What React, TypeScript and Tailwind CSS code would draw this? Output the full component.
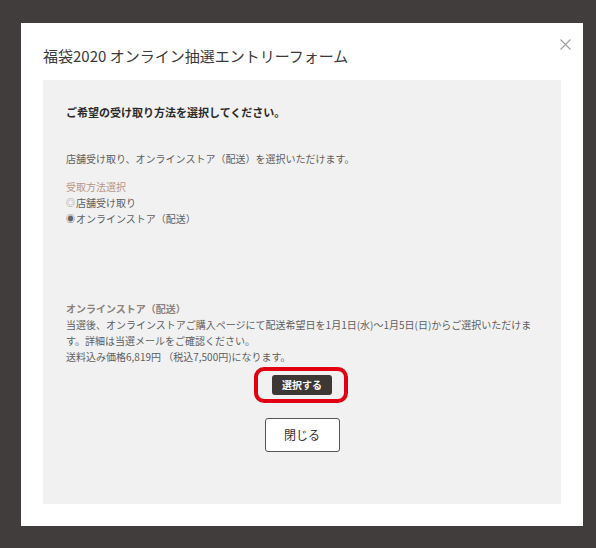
import React from "react";

const font = { fontFamily: '"Noto Sans CJK JP", "Noto Sans", sans-serif' };

export default function App() {
  return (
    <div
      className="w-[596px] h-[548px] bg-[#413d3d] pt-[23px] pl-[21px] overflow-hidden"
      style={font}
    >
      <div className="relative w-[562px] h-[503px] bg-white flex flex-col px-[22px] pt-[22px] pb-[22px]">
        <button className="absolute right-[11px] top-[14px] w-[14px] h-[14px] flex items-center justify-center text-[#a0a0a0]">
          <svg width="11" height="11" viewBox="0 0 11 11">
            <path d="M0.5 0.5 L10.5 10.5 M10.5 0.5 L0.5 10.5" stroke="currentColor" strokeWidth="1.2" fill="none" />
          </svg>
        </button>
        <h1 className="text-[15px] leading-[22px] text-[#3a3a3a] font-normal">
          福袋2020 オンライン抽選エントリーフォーム
        </h1>
        <div className="mt-[13px] flex-1 bg-[#f1f1f1] pt-[24px] pl-[23px] pr-[28px] flex flex-col text-[10px] leading-[16px] text-[#5e5e5e]">
          <p className="text-[11px] leading-[16px] font-bold text-[#2a2a2a]">
            ご希望の受け取り方法を選択してください。
          </p>
          <p className="mt-[31px]">店舗受け取り、オンラインストア（配送）を選択いただけます。</p>
          <p className="mt-[12px] text-[#b8958a]">受取方法選択</p>
          <p className="flex items-center">
            <span className="text-[9px] text-[#888] mr-[1px]">◎</span>店舗受け取り
          </p>
          <p className="flex items-center">
            <span className="text-[9px] text-[#666] mr-[1px]">◉</span>オンラインストア（配送）
          </p>
          <p className="mt-[74px] font-bold text-[#8e817a]">オンラインストア（配送）</p>
          <p>
            当選後、オンラインストアご購入ページにて配送希望日を1月1日(水)～1月5日(日)からご選択いただけま
            <br />
            す。詳細は当選メールをご確認ください。
          </p>
          <p>送料込み価格6,819円 （税込7,500円)になります。</p>
          <div className="mt-[10px] flex justify-center pl-[5px]">
            <div className="relative">
              <button className="w-[60px] h-[20px] rounded-[3px] bg-[#3d3835] text-white text-[10px] font-bold leading-[20px]">
                選択する
              </button>
              <span className="absolute -left-[18px] -right-[16px] -top-[8px] -bottom-[8px] border-[4px] border-[#e00012] rounded-[10px] pointer-events-none" />
            </div>
          </div>
          <div className="mt-[23px] flex justify-center pl-[5px]">
            <button className="w-[75px] h-[34px] rounded-[3px] bg-white border border-[#555] text-[12px] text-[#333]">
              閉じる
            </button>
          </div>
        </div>
      </div>
    </div>
  );
}
